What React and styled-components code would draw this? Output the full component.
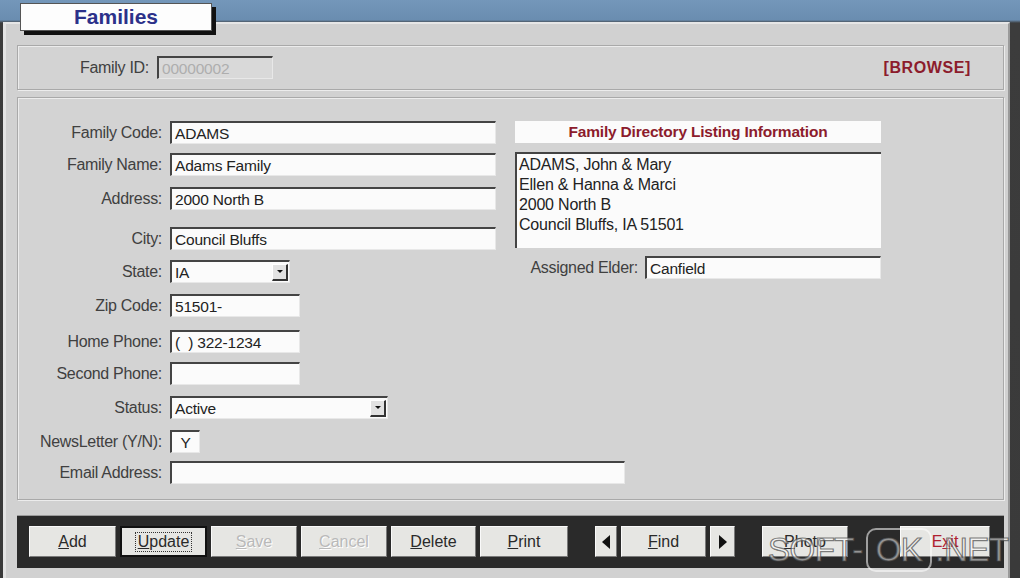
import React from "react";
import styled, { createGlobalStyle } from "styled-components";

const Global = createGlobalStyle`
  html, body { margin: 0; padding: 0; }
  body { background: #3a3a3a; font-family: "Liberation Sans", Arial, sans-serif; }
`;

const Screen = styled.div`
  position: relative;
  width: 1020px;
  height: 578px;
  overflow: hidden;
  background: linear-gradient(180deg, #7497ba 0px, #6a8db0 20px, #3c3c3c 23px, #3a3a3a 100%);
  display: flex;
  flex-direction: column;
  padding: 22px 0 0 3px;
  box-sizing: border-box;
`;

const Tab = styled.div`
  position: absolute;
  left: 20px;
  top: 3px;
  width: 192px;
  height: 28px;
  box-sizing: border-box;
  background: #fdfdfd;
  border: 1px solid #555;
  box-shadow: 4px 4px 0 #111;
  display: flex;
  align-items: center;
  justify-content: center;
  font-weight: bold;
  font-size: 21px;
  color: #2c318a;
  z-index: 2;
`;

const Window = styled.div`
  width: 1007px;
  height: 556px;
  box-sizing: border-box;
  background: #d1d1d1;
  border-top: 2px solid #e6e6e6;
  border-left: 3px solid #e4e4e4;
  border-right: 2px solid #9a9a9a;
  padding: 21px 3px 0 11px;
  display: flex;
  flex-direction: column;
  gap: 7px;
`;

const Panel = styled.div`
  box-sizing: border-box;
  height: ${(p) => p.$h}px;
  width: 987px;
  flex-shrink: 0;
  border: 1px solid #a9a9a9;
  box-shadow: inset 1px 1px 0 #ececec, 1px 1px 0 #ececec;
  background: #d3d3d3;
`;

const IdPanel = styled(Panel)`
  display: flex;
  align-items: center;
  padding: 0 32px 0 0;
`;

const Label = styled.span`
  font-size: 16px;
  letter-spacing: -0.3px;
  color: #404040;
  text-align: right;
  white-space: nowrap;
  flex-shrink: 0;
`;

const IdLabel = styled(Label)`
  width: 131px;
  margin-right: 8px;
`;

const Field = styled.div`
  box-sizing: border-box;
  flex-shrink: 0;
  width: ${(p) => p.$w}px;
  height: ${(p) => p.$h || 23}px;
  background: ${(p) => (p.$disabled ? "#d9d9d9" : "#fbfbfb")};
  color: ${(p) => (p.$disabled ? "#aeaeae" : "#222")};
  border-top: 2px solid #444;
  border-left: 2px solid #444;
  border-right: 1px solid #e8e8e8;
  border-bottom: 1px solid #e8e8e8;
  font-size: 15.5px;
  letter-spacing: -0.2px;
  line-height: 19px;
  padding: 0 3px;
  display: flex;
  align-items: center;
  justify-content: ${(p) => (p.$center ? "center" : "flex-start")};
  white-space: pre;
`;

const Browse = styled.span`
  margin-left: auto;
  font-weight: bold;
  font-size: 16px;
  letter-spacing: 0.6px;
  color: #8c1c2c;
`;

const MainPanel = styled(Panel)`
  display: flex;
  padding-top: 23px;
`;

const FormCol = styled.div`
  width: 497px;
  flex-shrink: 0;
  display: flex;
  flex-direction: column;
`;

const Row = styled.div`
  display: flex;
  align-items: center;
  gap: 8px;
  height: 23px;
  margin-top: ${(p) => p.$mt || 0}px;
`;

const RowLabel = styled(Label)`
  width: 144px;
`;

const Drop = styled.span`
  margin-left: auto;
  width: 16px;
  height: 17px;
  box-sizing: border-box;
  background: #e2e2e2;
  border-top: 1px solid #fff;
  border-left: 1px solid #fff;
  border-right: 2px solid #333;
  border-bottom: 2px solid #333;
  display: flex;
  align-items: center;
  justify-content: center;
  margin-right: -2px;
  &::after {
    content: "";
    border-left: 3px solid transparent;
    border-right: 3px solid transparent;
    border-top: 3px solid #111;
  }
`;

const DirCol = styled.div`
  width: 366px;
  display: flex;
  flex-direction: column;
`;

const DirHead = styled.div`
  height: 22px;
  background: #fbfbfb;
  display: flex;
  align-items: center;
  justify-content: center;
  font-weight: bold;
  font-size: 15.5px;
  letter-spacing: -0.2px;
  color: #8c1c2c;
`;

const DirText = styled.div`
  box-sizing: border-box;
  margin-top: 9px;
  height: 96px;
  background: #fbfbfb;
  border-top: 2px solid #444;
  border-left: 2px solid #444;
  padding: 1px 2px;
  font-size: 16px;
  letter-spacing: -0.2px;
  line-height: 20px;
  color: #222;
`;

const ElderRow = styled.div`
  display: flex;
  align-items: center;
  justify-content: flex-end;
  gap: 7px;
  margin-top: 8px;
  height: 23px;
`;

const ButtonBar = styled.div`
  margin-top: 8px;
  width: 987px;
  height: 53px;
  flex-shrink: 0;
  box-sizing: border-box;
  background: #2a2a2a;
  border-top: 1px solid #9a9a9a;
  padding: 10px 12px 0 12px;
  display: flex;
  gap: 4px;
`;

const Btn = styled.button`
  box-sizing: border-box;
  flex-shrink: 0;
  width: ${(p) => p.$w || 87}px;
  height: 31px;
  margin-left: ${(p) => p.$ml || 0}px;
  padding: 0;
  background: #e6e6e3;
  border: none;
  border-top: 1px solid #fafafa;
  border-left: 1px solid #fafafa;
  border-right: 1px solid #7a7a7a;
  border-bottom: 1px solid #7a7a7a;
  font-family: "Liberation Sans", Arial, sans-serif;
  font-size: 16px;
  color: ${(p) => (p.$disabled ? "#b9b9b9" : p.$red ? "#b02030" : "#2a2a2a")};
  text-shadow: ${(p) => (p.$disabled ? "1px 1px 0 #fff" : "none")};
  display: flex;
  align-items: center;
  justify-content: center;
  outline: ${(p) => (p.$focus ? "2px solid #111" : "none")};
  outline-offset: -2px;
  & u { text-decoration: underline; }
`;

const FocusText = styled.span`
  border: 1px dotted #333;
  padding: 0 2px;
`;

const Arrow = styled.span`
  width: 0;
  height: 0;
  border-top: 7px solid transparent;
  border-bottom: 7px solid transparent;
  ${(p) => (p.$dir === "left" ? "border-right: 8px solid #111;" : "border-left: 8px solid #111;")}
`;

const Watermark = styled.div`
  position: absolute;
  left: 768px;
  top: 528px;
  display: flex;
  align-items: center;
  font-size: 33px;
  letter-spacing: -0.5px;
  color: rgba(255, 255, 255, 0.5);
  -webkit-text-stroke: 1.2px rgba(70, 70, 70, 0.7);
  z-index: 3;
  pointer-events: none;
`;

const OkBox = styled.span`
  border: 2px solid rgba(255, 255, 255, 0.55);
  border-radius: 10px;
  padding: 0 8px;
  margin: 0 3px;
  line-height: 40px;
`;

const rows = [
  { label: "Family Code:", value: "ADAMS", w: 326, mt: 0 },
  { label: "Family Name:", value: "Adams Family", w: 326, mt: 9 },
  { label: "Address:", value: "2000 North B", w: 326, mt: 11 },
  { label: "City:", value: "Council Bluffs", w: 326, mt: 17 },
  { label: "State:", value: "IA", w: 120, mt: 10, drop: true },
  { label: "Zip Code:", value: "51501-", w: 130, mt: 11 },
  { label: "Home Phone:", value: "(  ) 322-1234", w: 130, mt: 13 },
  { label: "Second Phone:", value: "", w: 130, mt: 9 },
  { label: "Status:", value: "Active", w: 218, mt: 11, drop: true },
  { label: "NewsLetter (Y/N):", value: "Y", w: 30, mt: 11, center: true },
  { label: "Email Address:", value: "", w: 455, mt: 8 },
];

const listing = ["ADAMS, John & Mary", "Ellen & Hanna & Marci", "2000 North B", "Council Bluffs, IA 51501"];

export default function App() {
  return (
    <>
      <Global />
      <Screen>
        <Tab>Families</Tab>
        <Window>
          <IdPanel $h={45}>
            <IdLabel>Family ID:</IdLabel>
            <Field $w={116} $disabled>00000002</Field>
            <Browse>[BROWSE]</Browse>
          </IdPanel>
          <MainPanel $h={403}>
            <FormCol>
              {rows.map((r) => (
                <Row key={r.label} $mt={r.mt}>
                  <RowLabel>{r.label}</RowLabel>
                  <Field $w={r.w} $center={r.center}>
                    {r.value}
                    {r.drop && <Drop />}
                  </Field>
                </Row>
              ))}
            </FormCol>
            <DirCol>
              <DirHead>Family Directory Listing Information</DirHead>
              <DirText>
                {listing.map((l) => (
                  <div key={l}>{l}</div>
                ))}
              </DirText>
              <ElderRow>
                <Label>Assigned Elder:</Label>
                <Field $w={236}>Canfield</Field>
              </ElderRow>
            </DirCol>
          </MainPanel>
          <ButtonBar>
            <Btn><u>A</u>dd</Btn>
            <Btn $focus><FocusText><u>U</u>pdate</FocusText></Btn>
            <Btn $w={86} $disabled><u>S</u>ave</Btn>
            <Btn $w={86} $disabled><u>C</u>ancel</Btn>
            <Btn $w={85}><u>D</u>elete</Btn>
            <Btn $w={88}><u>P</u>rint</Btn>
            <Btn $w={22} $ml={23}><Arrow $dir="left" /></Btn>
            <Btn $w={85}><u>F</u>ind</Btn>
            <Btn $w={25}><Arrow $dir="right" /></Btn>
            <Btn $w={86} $ml={23}><u>P</u>hoto</Btn>
            <Btn $w={90} $ml={48} $red>E<u>x</u>it</Btn>
          </ButtonBar>
        </Window>
        <Watermark>
          SOFT-<OkBox>OK</OkBox>.NET
        </Watermark>
      </Screen>
    </>
  );
}
